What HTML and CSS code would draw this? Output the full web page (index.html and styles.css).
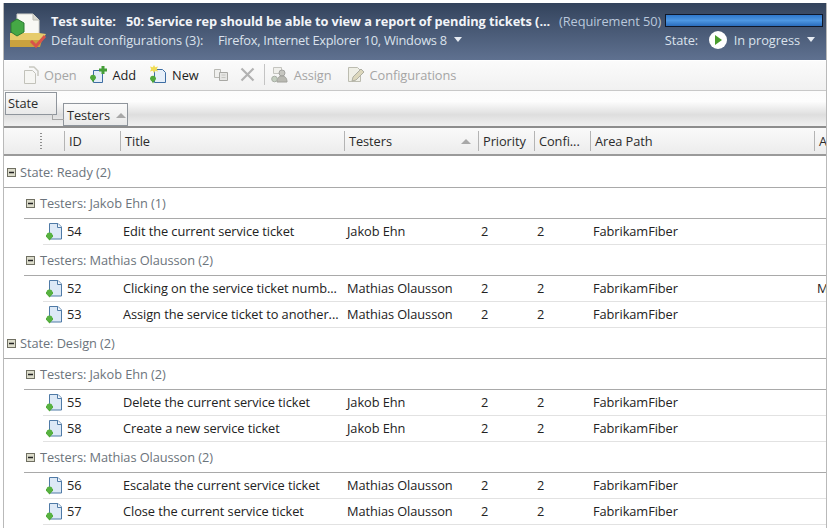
FILE: index.html
```html
<!DOCTYPE html>
<html lang="en">
<head>
    <meta charset="UTF-8">
    <meta name="viewport" content="width=device-width, initial-scale=1.0">
    <title>Test suite</title>
    <link rel="stylesheet" href="styles.css">
</head>
<body>
    <svg class="defs" width="0" height="0">
        <symbol id="testcase" viewBox="0 0 18 20">
            <path d="M4.5 2.5h8.5l3.5 3.5v12H4.5z" fill="#dde9f6" stroke="#4f7aa6"/>
            <path d="M12.5 2.5V6.5H16.5" fill="#f5f9fd" stroke="#4f7aa6"/>
            <path d="M1 14h7v1.500l-3.500 4-3.500-4z" fill="#4fa83a"/>
            <circle cx="4.500" cy="14.500" r="3" fill="#58b241"/>
        </symbol>
        <symbol id="collapse" viewBox="0 0 9 9">
            <rect x="0.500" y="0.500" width="8" height="8" fill="#dcdccb" stroke="#6f6f62"/>
            <path d="M2 4.500h5" stroke="#222" stroke-width="1.500"/>
        </symbol>
    </svg>

    <div class="page">
        <header class="suite">
            <svg class="suite-icon" width="38" height="36" viewBox="0 0 38 36">
                <path d="M8 1h16l6 6v19H8z" fill="#f8f8f4" stroke="#d4d4cc"/>
                <path d="M24 1v6h6" fill="#d8d8d0" stroke="#bcbcb2"/>
                <path d="M1 20h29l7 1-6 10H1z" fill="#e6cb6c"/>
                <path d="M1 27h32l-2 7H1z" fill="#c9a23e"/>
                <path d="M8 6l7 4v9l-7 4-6-4v-9z" fill="#45a845" stroke="#2c7a32"/>
                <path d="M22 28l5 5 9-10" fill="none" stroke="#d9534a" stroke-width="3"/>
            </svg>
            <div class="suite-info">
                <div class="suite-top">
                    <span class="suite-label">Test suite:</span>
                    <span class="suite-title">50: Service rep should be able to view a report of pending tickets (...</span>
                    <span class="suite-req">(Requirement 50)</span>
                    <span class="progress"></span>
                </div>
                <div class="suite-bottom">
                    <span class="config-label">Default configurations (3):</span>
                    <span class="config-value">Firefox, Internet Explorer 10, Windows 8</span>
                    <span class="caret"></span>
                    <div class="state">
                        <span class="state-label">State:</span>
                        <span class="play"></span>
                        <span>In progress</span>
                        <span class="caret"></span>
                    </div>
                </div>
            </div>
        </header>

        <div class="toolbar">
            <span class="tool disabled tool-open">
                <svg width="16" height="20" viewBox="0 0 16 20"><path d="M1.500 5.500h8l3 3v10h-11z" fill="#f6f6f3" stroke="#c2c2ba"/><path d="M6 2h5l4 4v5" fill="none" stroke="#c8c8c0" stroke-width="1.500"/></svg>
                Open
            </span>
            <span class="tool tool-add">
                <svg width="19" height="19" viewBox="0 0 19 19"><path d="M4.500 5.500h9v12h-9z" fill="#e3edf8" stroke="#3d6da3"/><path d="M1 12h6l-3 5.500z" fill="#3f9a34"/><circle cx="4" cy="12.500" r="2.800" fill="#4fa83a"/><path d="M14 1v8M10 5h8" stroke="#459e38" stroke-width="3"/></svg>
                Add
            </span>
            <span class="tool tool-new">
                <svg width="18" height="19" viewBox="0 0 18 19"><path d="M5.500 4.500h8l3 3v10h-11z" fill="#e6eff9" stroke="#3d6da3"/><path d="M1 13h6l-3 5.500z" fill="#3f9a34"/><circle cx="4" cy="13.500" r="2.800" fill="#4fa83a"/><path d="M5 0l1.200 2.300L9 1.500 7.800 4 9 6.500 6.200 5.700 5 8 3.800 5.700 1 6.500 2.200 4 1 1.500l2.800.8z" fill="#f0dc55"/></svg>
                New
            </span>
            <svg class="tool-copy" width="16" height="14" viewBox="0 0 16 14"><path d="M1.500 1.500h6v8h-6z" fill="#f0f0ee" stroke="#b9b9b4"/><path d="M6.500 4.500h8v8h-8z" fill="#e6e6e4" stroke="#a8a8a4"/><path d="M8.500 7h4M8.500 9.500h4" stroke="#c6c6c2"/></svg>
            <svg class="tool-x" width="15" height="15" viewBox="0 0 15 15"><path d="M1.500 1.500l12 12M13.500 1.500l-12 12" stroke="#b2b2b2" stroke-width="2.200"/></svg>
            <span class="tool-sep"></span>
            <span class="tool disabled tool-assign">
                <svg width="18" height="19" viewBox="0 0 18 19"><path d="M2.500 2.500h8v6h-8z" fill="#f0f0ec" stroke="#c4c4bf"/><circle cx="11" cy="8" r="3" fill="#c6c6c0" stroke="#a3a3a0"/><path d="M6 17c0-4 2-6 5-6s5 2 5 6z" fill="#b9b9b2" stroke="#a0a09a"/><circle cx="3.500" cy="14" r="2.800" fill="#c4cfc0" stroke="#a7aea4"/></svg>
                Assign
            </span>
            <span class="tool disabled">
                <svg width="18" height="19" viewBox="0 0 18 19"><path d="M1.500 2.500h9l3 3v11h-12z" fill="#efefe6" stroke="#bcbcb0"/><path d="M6 12l8-8 3 3-8 8-4 1z" fill="#dcd7bc" stroke="#aeaea2"/></svg>
                Configurations
            </span>
        </div>

        <div class="groups">
            <span class="chip chip-state">State</span>
            <span class="chip chip-testers">Testers <span class="sort-up"></span></span>
        </div>

        <div class="cols">
            <span class="col-grip"></span>
            <span class="col">ID</span>
            <span class="col">Title</span>
            <span class="col col-testers">Testers <span class="sort-up"></span></span>
            <span class="col">Priority</span>
            <span class="col">Confi...</span>
            <span class="col">Area Path</span>
            <span class="col">A</span>
        </div>

        <div class="list">
            <div class="group-state"><svg class="toggle"><use href="#collapse"/></svg>State: Ready (2)</div>

            <div class="group-testers"><svg class="toggle"><use href="#collapse"/></svg>Testers: Jakob Ehn (1)</div>
            <div class="row"><svg class="case"><use href="#testcase"/></svg><span>54</span><span>Edit the current service ticket</span><span>Jakob Ehn</span><span>2</span><span>2</span><span>FabrikamFiber</span><span></span></div>

            <div class="group-testers"><svg class="toggle"><use href="#collapse"/></svg>Testers: Mathias Olausson (2)</div>
            <div class="row"><svg class="case"><use href="#testcase"/></svg><span>52</span><span>Clicking on the service ticket numb...</span><span>Mathias Olausson</span><span>2</span><span>2</span><span>FabrikamFiber</span><span>M</span></div>
            <div class="row"><svg class="case"><use href="#testcase"/></svg><span>53</span><span>Assign the service ticket to another...</span><span>Mathias Olausson</span><span>2</span><span>2</span><span>FabrikamFiber</span><span></span></div>

            <div class="group-state"><svg class="toggle"><use href="#collapse"/></svg>State: Design (2)</div>

            <div class="group-testers"><svg class="toggle"><use href="#collapse"/></svg>Testers: Jakob Ehn (2)</div>
            <div class="row"><svg class="case"><use href="#testcase"/></svg><span>55</span><span>Delete the current service ticket</span><span>Jakob Ehn</span><span>2</span><span>2</span><span>FabrikamFiber</span><span></span></div>
            <div class="row"><svg class="case"><use href="#testcase"/></svg><span>58</span><span>Create a new service ticket</span><span>Jakob Ehn</span><span>2</span><span>2</span><span>FabrikamFiber</span><span></span></div>

            <div class="group-testers"><svg class="toggle"><use href="#collapse"/></svg>Testers: Mathias Olausson (2)</div>
            <div class="row"><svg class="case"><use href="#testcase"/></svg><span>56</span><span>Escalate the current service ticket</span><span>Mathias Olausson</span><span>2</span><span>2</span><span>FabrikamFiber</span><span></span></div>
            <div class="row"><svg class="case"><use href="#testcase"/></svg><span>57</span><span>Close the current service ticket</span><span>Mathias Olausson</span><span>2</span><span>2</span><span>FabrikamFiber</span><span></span></div>
        </div>
    </div>
</body>
</html>
```

FILE: styles.css
```css
html, body {
    margin: 0;
    height: 528px;
    overflow: hidden;
}
body {
    font-family: "Open Sans", "Noto Sans", sans-serif;
    font-size: 12.8px;
    letter-spacing: -0.07px;
    color: #2b2b2b;
    background-color: #fff;
}
.defs {
    display: block;
    height: 0;
}
.page {
    margin: 3px 1px 0 3px;
    border-left: 1px solid #b9b9b9;
    border-right: 1px solid #b9b9b9;
    height: 525px;
    overflow: hidden;
}

/* header */
.suite {
    display: flex;
    height: 57px;
    box-sizing: border-box;
    padding: 8px 3px 0 5px;
    gap: 4px;
    color: #fff;
    background: linear-gradient(#33435c, #5f7190);
}
.suite-icon {
    flex: none;
    margin-top: 2px;
}
.suite-info {
    flex: 1;
    white-space: nowrap;
}
.suite-top, .suite-bottom {
    display: flex;
    align-items: center;
    height: 19px;
}
.suite-bottom {
    color: #dbe2ec;
}
.suite-label {
    font-weight: 700;
    width: 75px;
    color: #f2f4f8;
}
.suite-title {
    font-weight: 700;
    width: 433px;
    letter-spacing: -0.08px;
    color: #f2f4f8;
}
.suite-req {
    color: #bac8dc;
    width: 106px;
}
.progress {
    flex: none;
    width: 156px;
    height: 11px;
    border: 1px solid #10182a;
    background: linear-gradient(#2f78cc, #4e97e2 50%, #2a6cbc);
}
.config-label {
    width: 167px;
}
.config-value {
    letter-spacing: -0.25px;
}
.caret {
    display: inline-block;
    margin-left: 7px;
    border: 4px solid transparent;
    border-top: 5px solid #e6ebf2;
    border-bottom: 0;
}
.state {
    display: flex;
    align-items: center;
    margin-left: auto;
    margin-right: 8px;
}
.state-label {
    width: 44px;
}
.play {
    width: 18px;
    height: 18px;
    border-radius: 50%;
    margin-right: 7px;
    background: #fff;
    position: relative;
}
.play::after {
    content: "";
    position: absolute;
    left: 6px;
    top: 4px;
    border: 5px solid transparent;
    border-left: 7px solid #4a9d2e;
    border-right: 0;
}

/* toolbar */
.toolbar {
    display: flex;
    align-items: center;
    box-sizing: border-box;
    height: 30px;
    margin-top: 1px;
    padding: 0 0 2px 19px;
    color: #1c1c1c;
    background: linear-gradient(#fbfbfb, #f1f1f1);
    border-bottom: 1px solid #c8c8c8;
}
.tool {
    display: flex;
    align-items: center;
    gap: 5px;
}
.tool-open {
    margin-right: 12px;
}
.tool-add {
    margin-right: 13px;
}
.tool-new {
    margin-right: 14px;
}
.tool-copy {
    margin-right: 11px;
}
.tool-x {
    margin-right: 9px;
}
.tool-assign {
    margin-right: 15px;
}
.disabled {
    color: #a5a5a5;
}
.tool-sep {
    flex: none;
    width: 1px;
    height: 21px;
    margin-right: 6px;
    background: #c4c4c4;
}

/* group by panel */
.groups {
    position: relative;
    box-sizing: border-box;
    height: 37px;
    background: linear-gradient(#fcfcfc, #fdfdfd 30%, #dedede 68%, #f0f0f0);
    border-bottom: 2px solid #8d8d8d;
}
.chip {
    position: absolute;
    box-sizing: border-box;
    border: 1px solid #8f959c;
    background: linear-gradient(#fafafa, #e9e9e9);
    line-height: 21px;
}
.chip-state {
    left: 1px;
    top: 1px;
    width: 52px;
    height: 23px;
    padding-left: 2px;
}
.chip-testers {
    left: 59px;
    top: 12px;
    width: 65px;
    height: 23px;
    padding-left: 3px;
    line-height: 22px;
}
.chip-testers::before {
    content: "";
    position: absolute;
    left: -12px;
    top: 10px;
    width: 11px;
    height: 5px;
    border: 1px solid #a5a5a5;
    border-top: 0;
    border-right: 0;
}
.sort-up {
    display: inline-block;
    margin-left: 3px;
    vertical-align: 2px;
    border: 5px solid transparent;
    border-bottom: 5px solid #a8a8a8;
    border-top: 0;
}

/* column headers */
.cols {
    display: grid;
    grid-template-columns: 60px 56px 224px 134px 56px 56px 224px 20px;
    align-items: center;
    height: 28px;
    box-sizing: border-box;
    border-bottom: 2px solid #9a9a9a;
    background: linear-gradient(#fafafa, #ececec);
    overflow: hidden;
}
.col {
    display: flex;
    align-items: center;
    height: 20px;
    padding-left: 4px;
    border-left: 1px solid #b4b4b4;
}
.col-testers {
    justify-content: space-between;
    padding-right: 7px;
}
.col-grip {
    justify-self: start;
    margin-left: 36px;
    width: 2px;
    height: 16px;
    background: repeating-linear-gradient(#8f8f8f 0 1px, transparent 1px 3px);
}

/* list */
.list {
    padding-top: 1px;
}
.group-state, .group-testers {
    display: flex;
    align-items: center;
    box-sizing: border-box;
    height: 31px;
    color: #6c747c;
    border-bottom: 1px solid #a9a9a9;
}
.group-state {
    padding-left: 3px;
}
.group-testers {
    margin-left: 20px;
    padding-left: 2px;
}
.toggle {
    flex: none;
    width: 9px;
    height: 9px;
    margin-right: 4px;
}
.group-testers .toggle {
    margin-right: 5px;
}
.row {
    display: grid;
    grid-template-columns: 24px 56px 224px 134px 56px 56px 224px 20px;
    align-items: center;
    box-sizing: border-box;
    height: 26px;
    padding-bottom: 2px;
    margin-left: 39px;
    color: #222;
    white-space: nowrap;
    border-bottom: 1px solid #e2e2e2;
}
.case {
    width: 18px;
    height: 20px;
    margin-left: 2px;
}
```
